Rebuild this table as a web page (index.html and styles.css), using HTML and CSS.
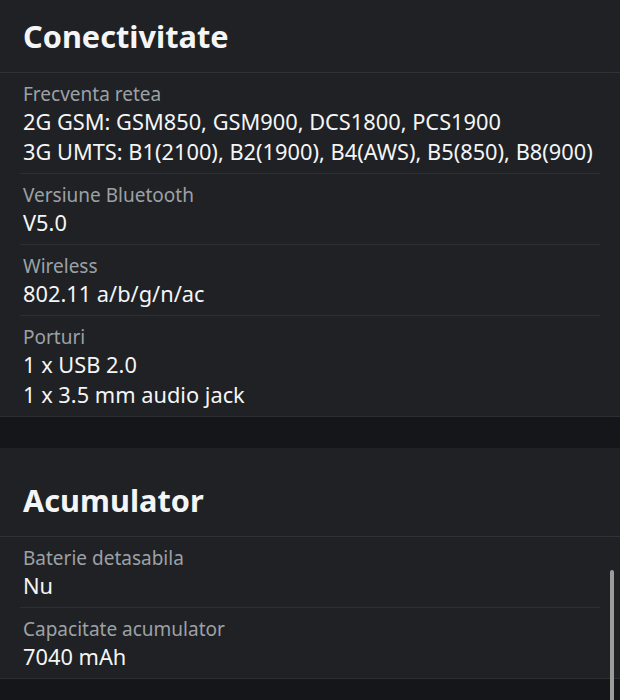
FILE: index.html
```html
<!DOCTYPE html>
<html lang="ro">
<head>
  <meta charset="UTF-8">
  <meta name="viewport" content="width=device-width, initial-scale=1.0">
  <title>Specificatii</title>
  <link rel="stylesheet" href="styles.css">
</head>
<body>
  <div class="page">
    <section class="spec-section">
      <h2 class="spec-title">Conectivitate</h2>
      <div class="spec-row">
        <div class="spec-label">Frecventa retea</div>
        <div class="spec-value">2G GSM: GSM850, GSM900, DCS1800, PCS1900</div>
        <div class="spec-value">3G UMTS: B1(2100), B2(1900), B4(AWS), B5(850), B8(900)</div>
      </div>
      <div class="spec-row">
        <div class="spec-label">Versiune Bluetooth</div>
        <div class="spec-value">V5.0</div>
      </div>
      <div class="spec-row">
        <div class="spec-label">Wireless</div>
        <div class="spec-value">802.11 a/b/g/n/ac</div>
      </div>
      <div class="spec-row">
        <div class="spec-label">Porturi</div>
        <div class="spec-value">1 x USB 2.0</div>
        <div class="spec-value">1 x 3.5 mm audio jack</div>
      </div>
    </section>

    <section class="spec-section">
      <h2 class="spec-title">Acumulator</h2>
      <div class="spec-row">
        <div class="spec-label">Baterie detasabila</div>
        <div class="spec-value">Nu</div>
      </div>
      <div class="spec-row">
        <div class="spec-label">Capacitate acumulator</div>
        <div class="spec-value">7040 mAh</div>
      </div>
    </section>
  </div>
  <div class="scrollbar"></div>
</body>
</html>
```

FILE: styles.css
```css
html, body {
  margin: 0;
  padding: 0;
  background: #141619;
  overflow: hidden;
}
body {
  font-family: "Noto Sans", "Open Sans", sans-serif;
  color: #f2f3f4;
  height: 700px;
  position: relative;
}
.page {
  margin-top: -16px;
}
.spec-section {
  background: #1f2124;
  border-bottom: 1px solid #2b2e32;
  margin-bottom: 31px;
}
.spec-title {
  margin: 0;
  padding: 32px 23px 16px;
  font-size: 30.7px;
  line-height: 40px;
  font-weight: 700;
  color: #f4f5f6;
  border-bottom: 1px solid #2f3236;
}
.spec-row {
  margin: 0 20px;
  padding: 6px 3px;
  border-bottom: 1px solid #2c2f33;
}
.spec-row:last-child {
  border-bottom: none;
}
.spec-label {
  font-size: 19px;
  line-height: 28px;
  padding-top: 1px;
  margin-bottom: -1px;
  color: #9da1a6;
}
.spec-value {
  font-size: 21.8px;
  line-height: 30px;
  color: #f4f5f6;
}
.scrollbar {
  position: absolute;
  left: 610px;
  top: 570px;
  width: 4px;
  height: 140px;
  border-radius: 2px;
  background: #9c9c9c;
}
```
